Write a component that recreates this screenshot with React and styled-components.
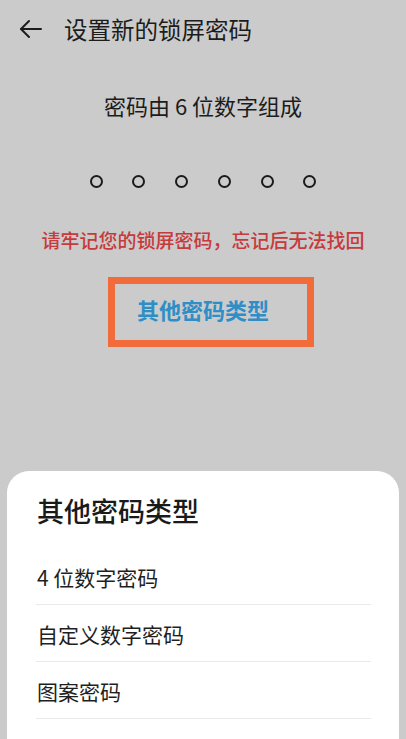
import React from 'react'
import styled, { createGlobalStyle } from 'styled-components'

const GlobalStyle = createGlobalStyle`
  html, body {
    margin: 0;
    padding: 0;
    background: #cbcbcb;
  }
  body {
    font-family: 'Noto Sans CJK SC', 'Noto Sans', sans-serif;
    overflow: hidden;
  }
`

const Page = styled.div`
  width: 406px;
  height: 739px;
  overflow: hidden;
  background: #cbcbcb;
  display: flex;
  flex-direction: column;

  & > * {
    flex-shrink: 0;
  }
`

const Header = styled.div`
  height: 58px;
  display: flex;
  align-items: center;
  padding-left: 19px;
  gap: 22px;
`

const BackButton = styled.div`
  width: 23px;
  height: 20px;
  display: flex;
  align-items: center;
  color: #1c1c1c;
`

const Title = styled.h1`
  margin: 0;
  font-size: 23.5px;
  font-weight: 400;
  color: #1c1c1c;
  line-height: 30px;
`

const Subtitle = styled.div`
  margin-top: 33px;
  text-align: center;
  font-size: 22px;
  line-height: 28px;
  color: #1c1c1c;
`

const Dots = styled.div`
  margin-top: 56px;
  display: flex;
  justify-content: center;
  gap: 29.7px;
`

const Dot = styled.span`
  width: 13px;
  height: 13px;
  box-sizing: border-box;
  border: 2.2px solid #1a1a1a;
  border-radius: 50%;
`

const Warning = styled.div`
  margin-top: 40px;
  text-align: center;
  font-size: 19px;
  line-height: 24px;
  font-weight: 500;
  color: #c63a3c;
`

const HighlightBox = styled.div`
  margin: 25px 0 0 108px;
  width: 206px;
  height: 70px;
  box-sizing: border-box;
  border: 7px solid #f26c3b;
  display: flex;
  align-items: center;
  padding: 0 0 7px 22px;
`

const LinkText = styled.span`
  font-size: 22px;
  font-weight: 700;
  color: #2f8ec6;
  line-height: 28px;
`

const Sheet = styled.div`
  margin: 124px 7px 0;
  background: #ffffff;
  border-radius: 22px 22px 0 0;
  padding: 0 28px 0 29px;
`

const SheetTitle = styled.div`
  padding: 25px 0 22px 1px;
  font-size: 27px;
  line-height: 30px;
  font-weight: 500;
  color: #1a1a1a;
`

const Option = styled.div`
  height: 57px;
  display: flex;
  align-items: center;
  padding: 2px 0 0 1px;
  box-sizing: border-box;
  font-size: 21px;
  color: #1f1f1f;
  border-bottom: 1px solid #e9e9e9;
`

const options = ['4 位数字密码', '自定义数字密码', '图案密码', '混合密码']

export default function App () {
  return (
    <Page>
      <GlobalStyle />
      <Header>
        <BackButton>
          <svg width="23" height="20" viewBox="0 0 23 20" fill="none" stroke="currentColor" strokeWidth="2" strokeLinecap="round" strokeLinejoin="round">
            <path d="M22 10H2" />
            <path d="M10 2L2 10l8 8" />
          </svg>
        </BackButton>
        <Title>设置新的锁屏密码</Title>
      </Header>
      <Subtitle>密码由 6 位数字组成</Subtitle>
      <Dots>
        {[0, 1, 2, 3, 4, 5].map(i => <Dot key={i} />)}
      </Dots>
      <Warning>请牢记您的锁屏密码，忘记后无法找回</Warning>
      <HighlightBox>
        <LinkText>其他密码类型</LinkText>
      </HighlightBox>
      <Sheet>
        <SheetTitle>其他密码类型</SheetTitle>
        {options.map(o => <Option key={o}>{o}</Option>)}
      </Sheet>
    </Page>
  )
}
